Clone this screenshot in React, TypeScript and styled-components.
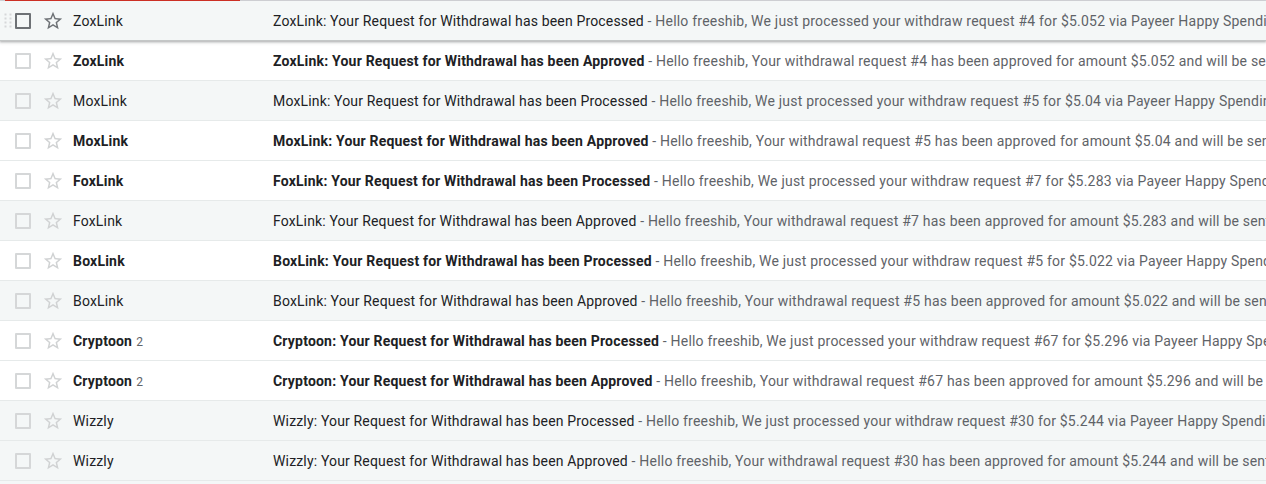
import React from "react";
import styled, { createGlobalStyle, css } from "styled-components";

const Global = createGlobalStyle`
  html, body { margin: 0; padding: 0; }
  body {
    background: #f4f7f7;
    font-family: Roboto, "Noto Sans", Arial, sans-serif;
    overflow: hidden;
  }
`;

const Page = styled.div`
  width: 1266px;
  overflow: hidden;
`;

const TopLine = styled.div`
  height: 1px;
  background: #dadce0;
  display: flex;
`;

const Progress = styled.div`
  margin-left: 5px;
  width: 235px;
  height: 1px;
  background: #d93025;
`;

const List = styled.div`
  display: flex;
  flex-direction: column;
`;

const Row = styled.div<{ $unread: boolean; $hover: boolean }>`
  position: relative;
  height: 39px;
  border-bottom: 1px solid #e6eaea;
  display: flex;
  align-items: center;
  padding-left: 4px;
  background: ${(p) => (p.$unread ? "#ffffff" : "#f4f7f7")};
  font-size: 14px;
  letter-spacing: 0.16px;
  color: #202124;
  white-space: nowrap;
  ${(p) =>
    p.$hover &&
    css`
      z-index: 2;
      background: #f4f7f7;
      border-bottom-color: #c4c7c7;
      box-shadow: 0 1px 2px 0 rgba(60, 64, 67, 0.3),
        0 1px 3px 1px rgba(60, 64, 67, 0.15);
    `}
`;

const Handle = styled.div`
  width: 8px;
  height: 15px;
  display: flex;
  align-items: center;
`;

const Checkbox = styled.div<{ $hover: boolean }>`
  margin-left: 3px;
  width: 12px;
  height: 12px;
  border: 2px solid ${(p) => (p.$hover ? "#6d7175" : "#d5d7d8")};
  border-radius: 1px;
  flex: none;
`;

const StarBox = styled.div<{ $hover: boolean }>`
  margin-left: 11px;
  width: 22px;
  height: 22px;
  flex: none;
  display: flex;
  color: ${(p) => (p.$hover ? "#6d7175" : "#d0d2d3")};
`;

const Sender = styled.div<{ $unread: boolean }>`
  margin-left: 9px;
  width: 200px;
  flex: none;
  font-weight: ${(p) => (p.$unread ? 700 : 400)};
  letter-spacing: ${(p) => (p.$unread ? "0.2px" : "0.16px")};
  overflow: hidden;
`;

const Count = styled.span`
  font-weight: 400;
  font-size: 12px;
  letter-spacing: 0.2px;
  color: #5f6368;
  margin-left: 4px;
`;

const Main = styled.div`
  flex: 1;
  min-width: 0;
  overflow: hidden;
`;

const Subject = styled.span<{ $unread: boolean }>`
  font-weight: ${(p) => (p.$unread ? 700 : 400)};
  letter-spacing: ${(p) => (p.$unread ? "0.2px" : "0.16px")};
  color: #202124;
`;

const Snippet = styled.span`
  color: #5f6368;
  letter-spacing: 0.21px;
`;

const DragDots = () => (
  <svg width="8" height="15" viewBox="0 0 8 15">
    {[1.5, 5.5, 9.5, 13.5].map((y) =>
      [1.5, 6.5].map((x) => (
        <rect key={`${x}-${y}`} x={x - 1} y={y - 1} width="2" height="2" fill="#d5d8d9" />
      ))
    )}
  </svg>
);

const StarIcon = () => (
  <svg width="22" height="22" viewBox="0 0 24 24" fill="currentColor">
    <path d="M22 9.24l-7.19-.62L12 2 9.19 8.63 2 9.24l5.46 4.73L5.82 21 12 17.27 18.18 21l-1.63-7.03L22 9.24zM12 15.4l-3.76 2.27 1-4.28-3.32-2.88 4.38-.38L12 6.1l1.71 4.04 4.38.38-3.32 2.88 1 4.28L12 15.4z" />
  </svg>
);

type Mail = {
  sender: string;
  count?: number;
  subject: string;
  snippet: string;
  unread: boolean;
};

const processed = (n: string, amt: string) =>
  `Hello freeshib, We just processed your withdraw request #${n} for $${amt} via Payeer Happy Spending`;
const approved = (n: string, amt: string) =>
  `Hello freeshib, Your withdrawal request #${n} has been approved for amount $${amt} and will be sent`;

const mails: Mail[] = [
  { sender: "ZoxLink", subject: "ZoxLink: Your Request for Withdrawal has been Processed", snippet: processed("4", "5.052"), unread: false },
  { sender: "ZoxLink", subject: "ZoxLink: Your Request for Withdrawal has been Approved", snippet: approved("4", "5.052"), unread: true },
  { sender: "MoxLink", subject: "MoxLink: Your Request for Withdrawal has been Processed", snippet: processed("5", "5.04"), unread: false },
  { sender: "MoxLink", subject: "MoxLink: Your Request for Withdrawal has been Approved", snippet: approved("5", "5.04"), unread: true },
  { sender: "FoxLink", subject: "FoxLink: Your Request for Withdrawal has been Processed", snippet: processed("7", "5.283"), unread: true },
  { sender: "FoxLink", subject: "FoxLink: Your Request for Withdrawal has been Approved", snippet: approved("7", "5.283"), unread: false },
  { sender: "BoxLink", subject: "BoxLink: Your Request for Withdrawal has been Processed", snippet: processed("5", "5.022"), unread: true },
  { sender: "BoxLink", subject: "BoxLink: Your Request for Withdrawal has been Approved", snippet: approved("5", "5.022"), unread: false },
  { sender: "Cryptoon", count: 2, subject: "Cryptoon: Your Request for Withdrawal has been Processed", snippet: processed("67", "5.296"), unread: true },
  { sender: "Cryptoon", count: 2, subject: "Cryptoon: Your Request for Withdrawal has been Approved", snippet: approved("67", "5.296"), unread: true },
  { sender: "Wizzly", subject: "Wizzly: Your Request for Withdrawal has been Processed", snippet: processed("30", "5.244"), unread: false },
  { sender: "Wizzly", subject: "Wizzly: Your Request for Withdrawal has been Approved", snippet: approved("30", "5.244"), unread: false },
];

export default function App() {
  return (
    <Page>
      <Global />
      <TopLine>
        <Progress />
      </TopLine>
      <List>
        {mails.map((m, i) => {
          const hover = i === 0;
          return (
            <Row key={i} $unread={m.unread} $hover={hover}>
              <Handle>{hover && <DragDots />}</Handle>
              <Checkbox $hover={hover} />
              <StarBox $hover={hover}>
                <StarIcon />
              </StarBox>
              <Sender $unread={m.unread}>
                {m.sender}
                {m.count && <Count>{m.count}</Count>}
              </Sender>
              <Main>
                <Subject $unread={m.unread}>{m.subject}</Subject>
                <Snippet> - {m.snippet}</Snippet>
              </Main>
            </Row>
          );
        })}
      </List>
    </Page>
  );
}
